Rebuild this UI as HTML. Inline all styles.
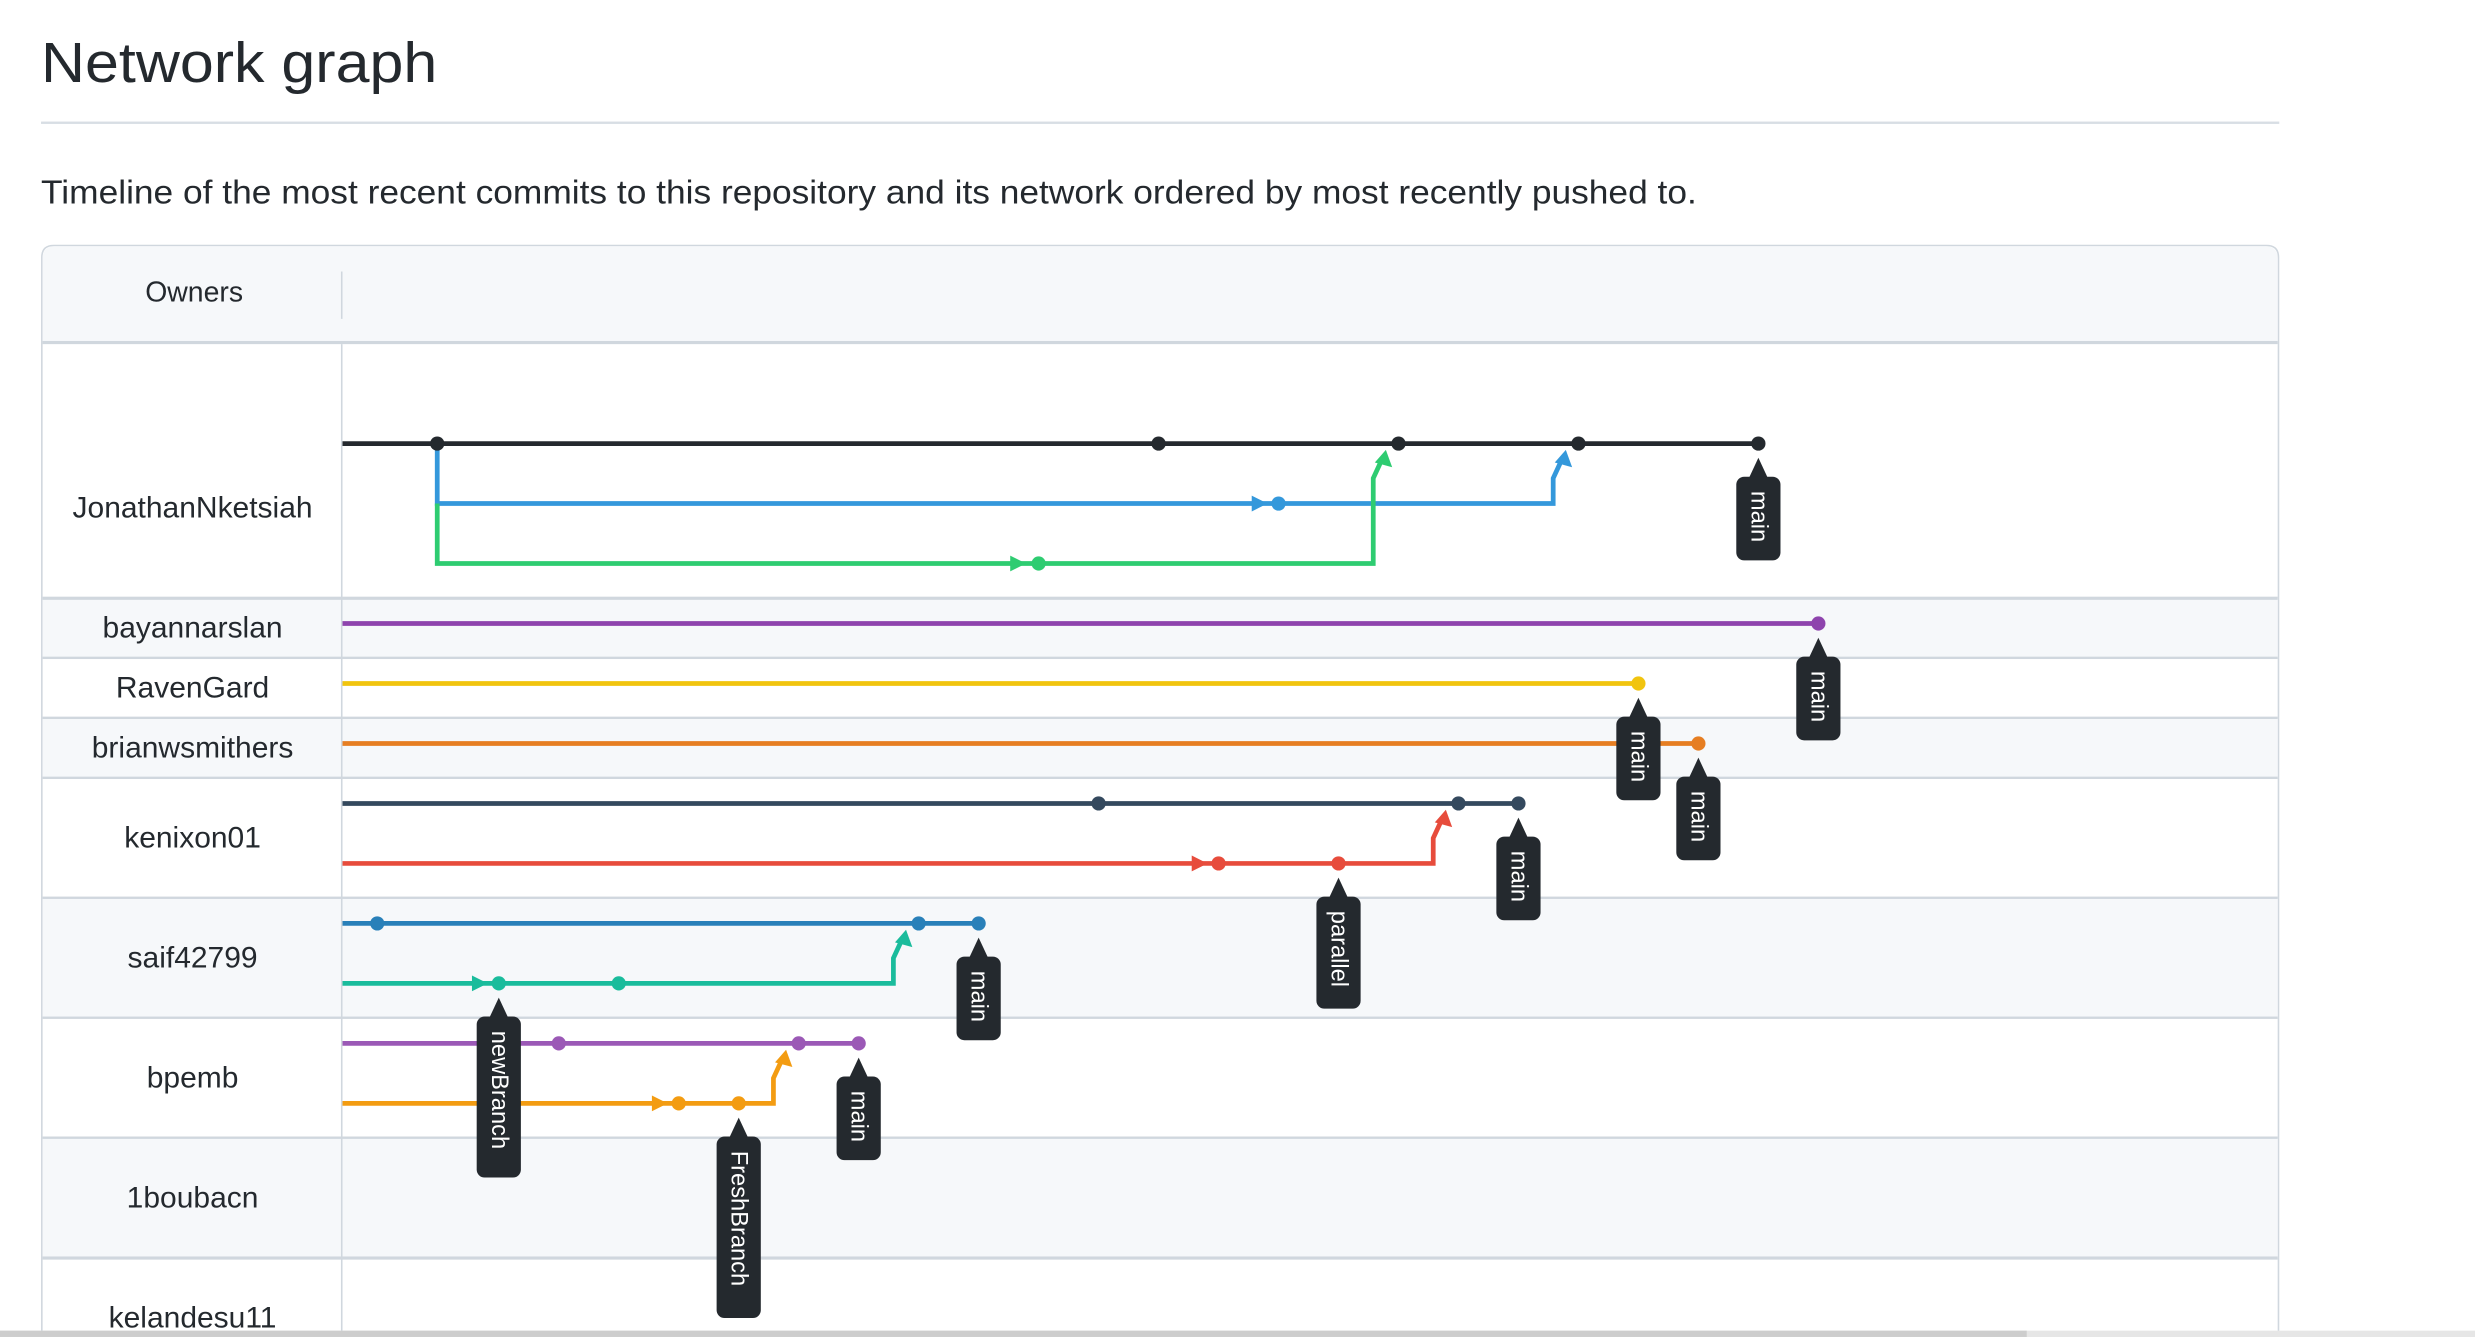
<!DOCTYPE html>
<html><head><meta charset="utf-8"><style>
html,body{margin:0;padding:0;background:#fff;width:2475px;height:1337px;overflow:hidden}
svg{display:block}
text{font-family:"Liberation Sans",Arial,sans-serif}
</style></head><body>
<svg width="2475" height="1337" viewBox="0 0 1568 847" xmlns="http://www.w3.org/2000/svg">
<rect width="1568" height="847" fill="#fff"/>
<text x="26" y="52" font-size="36" fill="#24292e" textLength="251" lengthAdjust="spacingAndGlyphs">Network graph</text>
<rect x="26" y="77" width="1418" height="1.5" fill="#d8dee4"/>
<text x="26" y="129" font-size="21" fill="#24292e" textLength="1049" lengthAdjust="spacingAndGlyphs">Timeline of the most recent commits to this repository and its network ordered by most recently pushed to.</text>
<path d="M26.5,847 V163 Q26.5,155.5 34,155.5 H1436 Q1443.5,155.5 1443.5,163 V847" fill="#fff" stroke="#d0d7de"/>
<path d="M27,217 V164 Q27,156 35,156 H1435 Q1443,156 1443,164 V217 Z" fill="#f6f8fa"/>
<rect x="27" y="379" width="1416" height="38" fill="#f6f8fa"/>
<rect x="27" y="455" width="1416" height="38" fill="#f6f8fa"/>
<rect x="27" y="569" width="1416" height="76" fill="#f6f8fa"/>
<rect x="27" y="721" width="1416" height="76" fill="#f6f8fa"/>
<g fill="#d0d7de">
<rect x="27" y="216" width="1416" height="2"/>
<rect x="27" y="378" width="1416" height="2"/>
<rect x="27" y="416" width="1416" height="1.5"/>
<rect x="27" y="454" width="1416" height="1.5"/>
<rect x="27" y="492" width="1416" height="1.5"/>
<rect x="27" y="568" width="1416" height="1.5"/>
<rect x="27" y="644" width="1416" height="1.5"/>
<rect x="27" y="720" width="1416" height="1.5"/>
<rect x="27" y="796" width="1416" height="2"/>
<rect x="216" y="172" width="1" height="30"/>
<rect x="216" y="218" width="1" height="629"/>
</g>
<g font-size="19" fill="#24292e" text-anchor="middle">
<text x="123" y="191" font-size="18">Owners</text>
<text x="122" y="328">JonathanNketsiah</text>
<text x="122" y="404">bayannarslan</text>
<text x="122" y="442">RavenGard</text>
<text x="122" y="480">brianwsmithers</text>
<text x="122" y="537">kenixon01</text>
<text x="122" y="613">saif42799</text>
<text x="122" y="689">bpemb</text>
<text x="122" y="765">1boubacn</text>
<text x="122" y="841">kelandesu11</text>
</g>
<g fill="none" stroke-width="3">
<path d="M217,281 H1114" stroke="#24292e"/>
<path d="M277,281 V319 H984 V303 L990,290" stroke="#3498db"/>
<path d="M277,319 V357 H870 V303 L876,290" stroke="#2ecc71"/>
<path d="M217,395 H1152" stroke="#8e44ad"/>
<path d="M217,433 H1038" stroke="#f1c40f"/>
<path d="M217,471 H1076" stroke="#e67e22"/>
<path d="M217,509 H962" stroke="#34495e"/>
<path d="M217,547 H908 V531 L914,518" stroke="#e74c3c"/>
<path d="M217,585 H620" stroke="#2980b9"/>
<path d="M217,623 H566 V607 L572,594" stroke="#1abc9c"/>
<path d="M217,661 H544" stroke="#9b59b6"/>
<path d="M217,699 H490 V683 L496,670" stroke="#f39c12"/>
</g>
<polygon points="793,314 803,319 793,324" fill="#3498db"/>
<polygon points="992,285 985,293 996,296" fill="#3498db"/>
<polygon points="640,352 650,357 640,362" fill="#2ecc71"/>
<polygon points="878,285 871,293 882,296" fill="#2ecc71"/>
<polygon points="755,542 765,547 755,552" fill="#e74c3c"/>
<polygon points="916,513 909,521 920,524" fill="#e74c3c"/>
<polygon points="299,618 309,623 299,628" fill="#1abc9c"/>
<polygon points="574,589 567,597 578,600" fill="#1abc9c"/>
<polygon points="413,694 423,699 413,704" fill="#f39c12"/>
<polygon points="498,665 491,673 502,676" fill="#f39c12"/>
<g fill="#24292e"><circle cx="277" cy="281" r="4.5"/><circle cx="734" cy="281" r="4.5"/><circle cx="886" cy="281" r="4.5"/><circle cx="1000" cy="281" r="4.5"/><circle cx="1114" cy="281" r="4.5"/></g>
<circle cx="810" cy="319" r="4.5" fill="#3498db"/>
<circle cx="658" cy="357" r="4.5" fill="#2ecc71"/>
<circle cx="1152" cy="395" r="4.5" fill="#8e44ad"/>
<circle cx="1038" cy="433" r="4.5" fill="#f1c40f"/>
<circle cx="1076" cy="471" r="4.5" fill="#e67e22"/>
<g fill="#34495e"><circle cx="696" cy="509" r="4.5"/><circle cx="924" cy="509" r="4.5"/><circle cx="962" cy="509" r="4.5"/></g>
<g fill="#e74c3c"><circle cx="772" cy="547" r="4.5"/><circle cx="848" cy="547" r="4.5"/></g>
<g fill="#2980b9"><circle cx="239" cy="585" r="4.5"/><circle cx="582" cy="585" r="4.5"/><circle cx="620" cy="585" r="4.5"/></g>
<g fill="#1abc9c"><circle cx="316" cy="623" r="4.5"/><circle cx="392" cy="623" r="4.5"/></g>
<g fill="#9b59b6"><circle cx="354" cy="661" r="4.5"/><circle cx="506" cy="661" r="4.5"/><circle cx="544" cy="661" r="4.5"/></g>
<g fill="#f39c12"><circle cx="430" cy="699" r="4.5"/><circle cx="468" cy="699" r="4.5"/></g>
<g fill="#24292e">
<polygon points="1114,290 1107,305 1121,305"/><rect x="1100" y="302" width="28" height="53" rx="5"/>
<polygon points="1152,404 1145,419 1159,419"/><rect x="1138" y="416" width="28" height="53" rx="5"/>
<polygon points="1038,442 1031,457 1045,457"/><rect x="1024" y="454" width="28" height="53" rx="5"/>
<polygon points="1076,480 1069,495 1083,495"/><rect x="1062" y="492" width="28" height="53" rx="5"/>
<polygon points="962,518 955,533 969,533"/><rect x="948" y="530" width="28" height="53" rx="5"/>
<polygon points="848,556 841,571 855,571"/><rect x="834" y="568" width="28" height="71" rx="5"/>
<polygon points="620,594 613,609 627,609"/><rect x="606" y="606" width="28" height="53" rx="5"/>
<polygon points="316,632 309,647 323,647"/><rect x="302" y="644" width="28" height="102" rx="5"/>
<polygon points="544,670 537,685 551,685"/><rect x="530" y="682" width="28" height="53" rx="5"/>
<polygon points="468,708 461,723 475,723"/><rect x="454" y="720" width="28" height="115" rx="5"/>
</g>
<g fill="#fff" font-size="15" dominant-baseline="central">
<text transform="translate(1114,311) rotate(90)">main</text>
<text transform="translate(1152,425) rotate(90)">main</text>
<text transform="translate(1038,463) rotate(90)">main</text>
<text transform="translate(1076,501) rotate(90)">main</text>
<text transform="translate(962,539) rotate(90)">main</text>
<text transform="translate(848,577) rotate(90)">parallel</text>
<text transform="translate(620,615) rotate(90)">main</text>
<text transform="translate(316,653) rotate(90)">newBranch</text>
<text transform="translate(544,691) rotate(90)">main</text>
<text transform="translate(468,729) rotate(90)">FreshBranch</text>
</g>
<rect x="0" y="843" width="1568" height="4" fill="#e6e6e6"/>
<rect x="0" y="843" width="1284" height="4" fill="#cdcdcd"/>
</svg>
</body></html>
